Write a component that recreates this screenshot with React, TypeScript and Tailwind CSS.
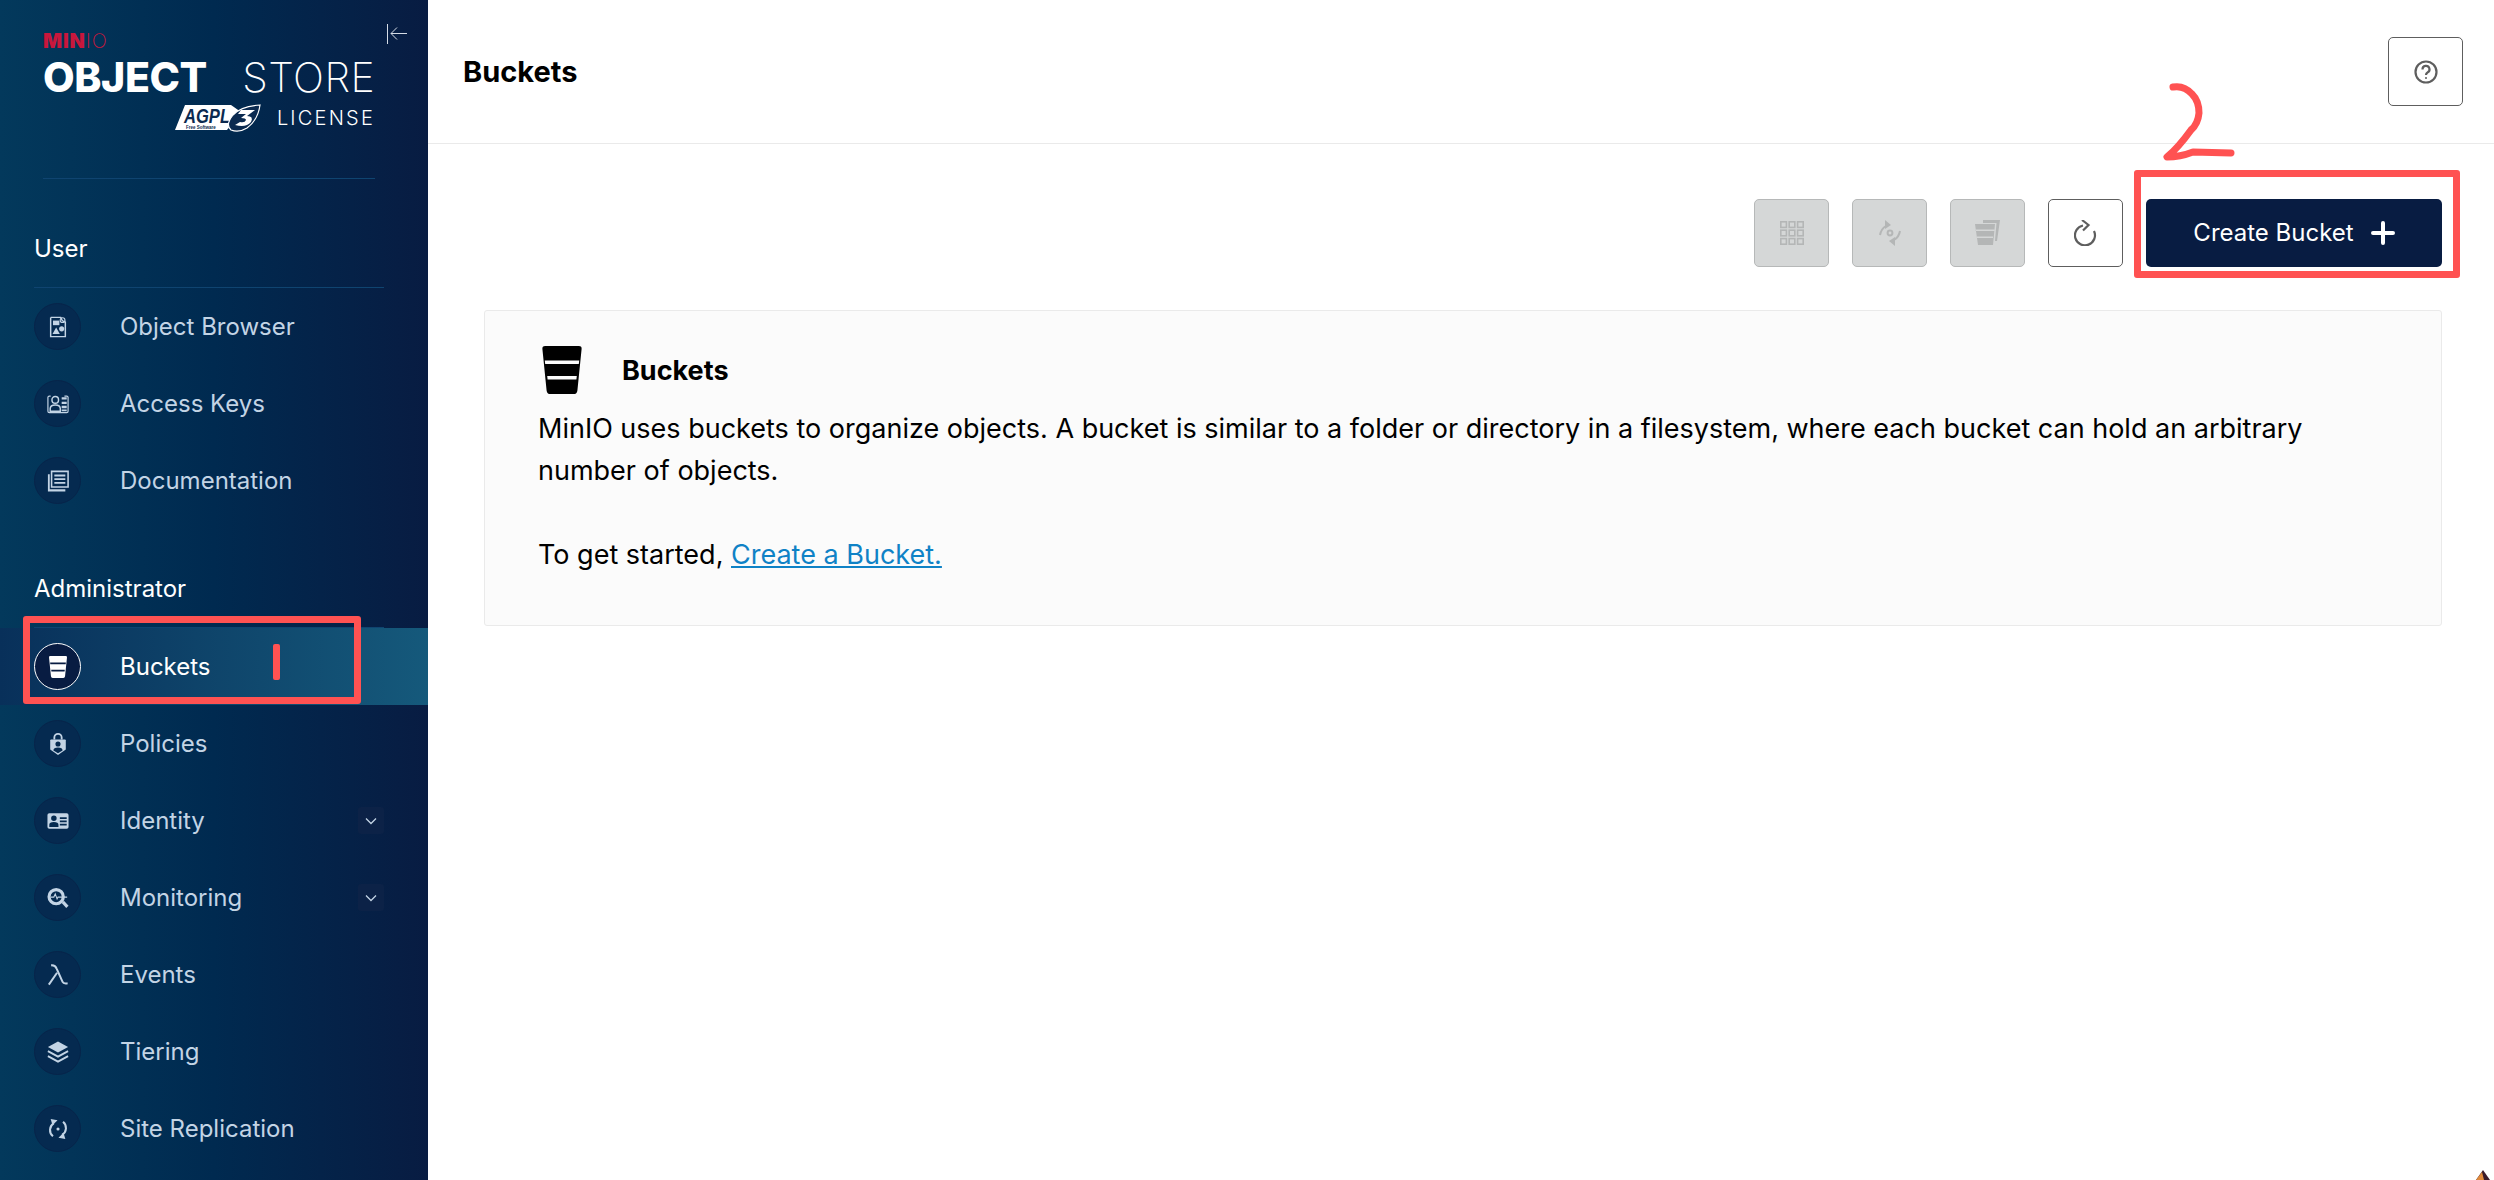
import React from "react";

const Ico = ({ children, s = 22, vb = 24 }: { children: React.ReactNode; s?: number; vb?: number }) => (
  <svg width={s} height={s} viewBox={`0 0 ${vb} ${vb}`} fill="currentColor">{children}</svg>
);

const BucketShape = ({ cut }: { cut: string }) => (
  <>
    <path d="M2.2 1.5Q2 0 3.6 0H20.4Q22 0 21.8 1.5L19.7 22.2Q19.5 24 17.8 24H6.2Q4.5 24 4.3 22.2Z" />
    <path d="M3.4 7.2H20.6L20.4 9H3.6ZM4.6 15H19.4L19.2 16.8H4.8Z" fill={cut} />
  </>
);

const ObjectIcon = () => (
  <Ico>
    <path d="M4 1.5H15.5M20 6V22.5H4V1.5M15.5 1.5A4 4 0 0 0 20 6" fill="none" stroke="currentColor" strokeWidth="1.6" />
    <circle cx="17" cy="4.5" r="2.6" fill="none" stroke="currentColor" strokeWidth="1.2" />
    <rect x="6.5" y="5" width="7" height="5" />
    <path d="M10 12.5L14 19.5H6Z" />
    <circle cx="16" cy="14" r="2.8" />
  </Ico>
);
const KeysIcon = () => (
  <Ico>
    <path d="M4 3.5H2.5Q1 3.5 1 5V20Q1 21.5 2.5 21.5H21.5Q23 21.5 23 20V5Q23 3.5 21.5 3.5H19" fill="none" stroke="currentColor" strokeWidth="1.3" />
    <circle cx="9" cy="7.5" r="3.6" fill="none" stroke="currentColor" strokeWidth="1.6" />
    <path d="M3.5 20V17Q3.5 13 9 13Q14.5 13 14.5 17V20Z" fill="none" stroke="currentColor" strokeWidth="1.6" />
    <path d="M16 4.5H21.5V7H16ZM16 9.5H21.5V12H16ZM16 14H21.5V16.5H16ZM16 18H21.5V20H16Z" />
  </Ico>
);
const DocIcon = () => (
  <Ico>
    <path d="M5 1.5H23V18.5H5Z" fill="none" stroke="currentColor" strokeWidth="1.7" />
    <path d="M8 5H20V7H8ZM8 9H20V11H8ZM8 13H20V15H8Z" />
    <path d="M1 4.5H3V21H20V23.5H1Z" />
  </Ico>
);
const PolicyIcon = () => (
  <Ico>
    <path d="M8 7V5A4 4 0 0 1 16 5V7" fill="none" stroke="currentColor" strokeWidth="2" />
    <path d="M4.5 7H19.5Q20.5 7 20.5 8V18L12 24L3.5 18V8Q3.5 7 4.5 7Z" />
    <circle cx="12" cy="12" r="2.8" fill="#052a50" />
    <path d="M7 19Q7 15.8 12 15.8Q17 15.8 17 19L12 22Z" fill="#052a50" />
  </Ico>
);
const IdentityIcon = () => (
  <Ico>
    <path fillRule="evenodd" d="M2.5 3.5H21.5Q23.5 3.5 23.5 5.5V18.5Q23.5 20.5 21.5 20.5H2.5Q.5 20.5 .5 18.5V5.5Q.5 3.5 2.5 3.5ZM7.5 6A3 3 0 1 0 7.5 12A3 3 0 1 0 7.5 6ZM2.5 18.5H12.5V16Q12.5 13 7.5 13Q2.5 13 2.5 16ZM14 8V9.8H21.5V8ZM14 11.5V13.3H21.5V11.5ZM14 15V16.8H21.5V15Z" />
  </Ico>
);
const MonitorIcon = () => (
  <Ico>
    <path fillRule="evenodd" d="M10 1A9.5 9.5 0 1 0 10 20A9.5 9.5 0 1 0 10 1ZM10 4.5A6 6 0 1 1 10 16.5A6 6 0 1 1 10 4.5Z" />
    <path d="M4 11H7.5L9 7.5L11 13L12 11H22" fill="none" stroke="currentColor" strokeWidth="1.2" />
    <path d="M16 17.5L18.5 15L23.5 20.5L21 23Z" />
  </Ico>
);
const LambdaIcon = () => (
  <Ico>
    <path d="M4.5 1.5Q9 1 10.5 5L17 19.5Q18 21.8 22.5 21" fill="none" stroke="currentColor" strokeWidth="2.2" />
    <path d="M11 9.5L2 22.5" fill="none" stroke="currentColor" strokeWidth="2.2" />
  </Ico>
);
const TierIcon = () => (
  <Ico>
    <path d="M12 .5L23 6.5L12 12.5L1 6.5Z" />
    <path d="M1 11L12 17L23 11M1 16.5L12 22.5L23 16.5" fill="none" stroke="currentColor" strokeWidth="2" />
  </Ico>
);
const ReplicationIcon = () => (
  <Ico>
    <path d="M7.5 5.5A9 9 0 0 0 6.5 20M16.5 18.5A9 9 0 0 0 17.5 4" fill="none" stroke="currentColor" strokeWidth="2.2" />
    <path d="M4 1L11.5 2.5L6 8ZM20 23L12.5 21.5L18 16Z" />
    <circle cx="12" cy="12" r="1.7" />
  </Ico>
);

const Circle = ({ children, active }: { children: React.ReactNode; active?: boolean }) => (
  <span
    className={
      "flex h-[47px] w-[47px] shrink-0 items-center justify-center rounded-full border " +
      (active ? "border-white bg-[#081c42] text-white" : "border-[#07244a] bg-[#052a50] text-[#c3d4e5]")
    }
  >
    {children}
  </span>
);

const NavRow = ({ icon, label, chevron, active }: { icon: React.ReactNode; label: string; chevron?: boolean; active?: boolean }) => (
  <div
    className={
      "flex h-[77px] items-center pl-[34px] pr-[44px] " +
      (active ? "bg-[linear-gradient(90deg,#08305a,#15597b)]" : "")
    }
  >
    <Circle active={active}>{icon}</Circle>
    <span className={"ml-[39px] flex-1 text-[24px] leading-none " + (active ? "text-white" : "text-[#c3d4e5]")}>{label}</span>
    {chevron && (
      <span className="flex h-[27px] w-[26px] items-center justify-center rounded-[3px] bg-[#0c2247] text-[#c3d4e5]">
        <svg width="12" height="8" viewBox="0 0 12 8" fill="none" stroke="currentColor" strokeWidth="1.3">
          <path d="M1 1.5L6 6.5L11 1.5" />
        </svg>
      </span>
    )}
  </div>
);

const SectionLabel = ({ children }: { children: React.ReactNode }) => (
  <div className="ml-[34px] h-[109px] w-[350px] border-b border-[#0f4470] pt-[52px] text-[24px] leading-[36px] text-white">{children}</div>
);

const Tool = ({ children, off }: { children: React.ReactNode; off?: boolean }) => (
  <button
    className={
      "flex h-[68px] w-[75px] items-center justify-center rounded-[5px] border " +
      (off ? "border-[#b6b8b8] bg-[#d5d7d7] text-[#b4b6b6]" : "border-[#5e5e5e] bg-white text-[#5e5e5e]")
    }
  >
    {children}
  </button>
);

const Agpl = () => (
  <svg width="86" height="28" viewBox="0 0 86 28" className="mr-[16px]">
    <path d="M10 1H56L66 8L52 26H0Z" fill="#fff" />
    <text x="9" y="19" fontFamily="Liberation Sans, sans-serif" fontStyle="italic" fontWeight="700" fontSize="20" fill="#0b2a50" textLength="46" lengthAdjust="spacingAndGlyphs">AGPL</text>
    <text x="11" y="25" fontFamily="Liberation Sans, sans-serif" fontWeight="700" fontSize="4.5" fill="#0b2a50">Free Software</text>
    <path d="M85 1Q66 2 58 11Q50 21 56 26Q64 29 72 24Q83 16 85 1Z" fill="#0b2a50" stroke="#fff" strokeWidth="1.2" />
    <path d="M66 6H80L72 12Q79 12 76 18Q71 24 60 21L65 18Q70 19 71 16Q71 14 66 14L71 10H63Z" fill="#fff" />
  </svg>
);

export default function App() {
  return (
    <div className="relative flex h-[1180px] w-[2494px] overflow-hidden bg-white font-['Inter','Liberation_Sans',sans-serif] text-black">
      <aside className="h-full w-[428px] shrink-0 bg-[linear-gradient(90deg,#03395c,#002a50_50%,#081c42)]">
        <div className="ml-[43px] h-[179px] w-[332px] border-b border-[#0f4470] pt-[24px]">
          <div className="flex h-[22px] w-[364px] items-start justify-between">
            <span className="mt-[7px] text-[20px] leading-[20px] tracking-[0.04em] text-[#c8173c]">
              <span className="font-black">MIN</span><span className="font-extralight">IO</span>
            </span>
            <svg width="20" height="20" viewBox="0 0 20 20" fill="none" stroke="#d5dce6" strokeWidth="1" className="">
              <path d="M.5 0V20M20 9.5H4M10 3.5L4 9.5L10 15.5" />
            </svg>
          </div>
          <div className="mt-[11px] flex h-[41px] items-center justify-between text-[41px] leading-[41px] text-white">
            <span className="font-extrabold tracking-[-0.01em]">OBJECT</span>
            <span className="font-extralight tracking-[0.01em]">STORE</span>
          </div>
          <div className="mt-[6px] flex items-center justify-end">
            <Agpl />
            <span className="text-[20px] font-light leading-none tracking-[0.11em] text-white">LICENSE</span>
          </div>
        </div>
        <SectionLabel>User</SectionLabel>
        <NavRow icon={<ObjectIcon />} label="Object Browser" />
        <NavRow icon={<KeysIcon />} label="Access Keys" />
        <NavRow icon={<DocIcon />} label="Documentation" />
        <SectionLabel>Administrator</SectionLabel>
        <NavRow active icon={<Ico s={22}><BucketShape cut="#081c42" /></Ico>} label="Buckets" />
        <NavRow icon={<PolicyIcon />} label="Policies" />
        <NavRow icon={<IdentityIcon />} label="Identity" chevron />
        <NavRow icon={<MonitorIcon />} label="Monitoring" chevron />
        <NavRow icon={<LambdaIcon />} label="Events" />
        <NavRow icon={<TierIcon />} label="Tiering" />
        <NavRow icon={<ReplicationIcon />} label="Site Replication" />
      </aside>

      <main className="min-w-0 flex-1">
        <header className="flex h-[144px] items-center justify-between border-b border-[#eaeaea] pl-[35px] pr-[31px]">
          <h1 className="text-[29px] font-bold leading-none">Buckets</h1>
          <button className="flex h-[69px] w-[75px] items-center justify-center rounded-[5px] border border-[#5e5e5e] bg-white text-[#5e5e5e]">
            <svg width="24" height="24" viewBox="0 0 24 24" fill="none" stroke="currentColor" strokeWidth="2.2">
              <circle cx="12" cy="12" r="10.5" />
              <path d="M8.5 9.5A3.5 3.5 0 1 1 13.5 12.5Q12 13.3 12 15" />
              <circle cx="12" cy="18" r="1" fill="currentColor" stroke="none" />
            </svg>
          </button>
        </header>
        <div className="flex justify-end gap-[23px] pr-[52px] pt-[55px]">
          <Tool off>
            <svg width="24" height="24" viewBox="0 0 24 24" fill="none" stroke="currentColor" strokeWidth="1.6">
              <rect x=".8" y=".8" width="5.6" height="5.6" /><rect x="9.2" y=".8" width="5.6" height="5.6" /><rect x="17.6" y=".8" width="5.6" height="5.6" />
              <rect x=".8" y="9.2" width="5.6" height="5.6" /><rect x="9.2" y="9.2" width="5.6" height="5.6" /><rect x="17.6" y="9.2" width="5.6" height="5.6" />
              <rect x=".8" y="17.6" width="5.6" height="5.6" /><rect x="9.2" y="17.6" width="5.6" height="5.6" /><rect x="17.6" y="17.6" width="5.6" height="5.6" />
            </svg>
          </Tool>
          <Tool off>
            <svg width="24" height="26" viewBox="0 0 24 26" fill="none" stroke="currentColor" strokeWidth="2">
              <path d="M8 6Q3 9 2 15M16 20Q21 17 22 11" />
              <path d="M7 0L13 5L7 9ZM17 26L11 21L17 17Z" fill="currentColor" stroke="none" />
              <circle cx="12" cy="13" r="2.4" />
            </svg>
          </Tool>
          <Tool off>
            <svg width="26" height="26" viewBox="0 0 26 26" fill="currentColor">
              <path d="M8 0H25L22 21L20 21L21.5 3H8Z" />
              <path d="M0 4H20L18 25H3ZM.7 9.5V11H19.3V9.5ZM2 16.5V18H18V16.5Z" fillRule="evenodd" />
            </svg>
          </Tool>
          <Tool>
            <svg width="24" height="26" viewBox="0 0 24 26" fill="none" stroke="currentColor" strokeWidth="2.2">
              <path d="M9 5.5A10 10 0 1 0 20 11" />
              <path d="M8 0L14.5 5L9 10.5" />
            </svg>
          </Tool>
          <button className="flex h-[68px] w-[296px] items-center justify-center rounded-[5px] bg-[#081c42] text-[24px] text-white">
            Create Bucket
            <svg width="24" height="24" viewBox="0 0 24 24" className="ml-[17px]" fill="none" stroke="#fff" strokeWidth="4" strokeLinecap="round">
              <path d="M12 2V22M2 12H22" />
            </svg>
          </button>
        </div>
        <section className="ml-[56px] mr-[52px] mt-[43px] h-[316px] rounded-[3px] border border-[#eaeaea] bg-[#fbfbfb] pl-[53px] pr-[40px] pt-[35px]">
          <div className="flex items-center">
            <Ico s={48}><BucketShape cut="#fbfbfb" /></Ico>
            <h2 className="ml-[36px] text-[27px] font-bold leading-none">Buckets</h2>
          </div>
          <p className="mt-[14px] text-[27px] leading-[42px]">
            MinIO uses buckets to organize objects. A bucket is similar to a folder or directory in a filesystem, where each bucket can hold an arbitrary number of objects.
          </p>
          <p className="mt-[42px] text-[27px] leading-[42px]">
            To get started, <a className="text-[#0f82c6] underline">Create a Bucket.</a>
          </p>
        </section>
      </main>

      {/* hand-drawn red annotations lying over the page */}
      <div className="absolute left-[23px] top-[616px] h-[88px] w-[338px] rounded-[3px] border-[7px] border-[#ff5252]" />
      <div className="absolute left-[273px] top-[644px] h-[36px] w-[7px] rounded-[2px] bg-[#ff5252]" />
      <div className="absolute left-[2134px] top-[170px] h-[108px] w-[326px] rounded-[3px] border-[7px] border-[#ff5252]" />
      <svg className="absolute left-[2160px] top-[80px]" width="80" height="84" viewBox="2160 80 80 84" fill="none" stroke="#ff5252" strokeWidth="7" strokeLinecap="round" strokeLinejoin="round">
        <path d="M2173 87Q2184 85 2192 94Q2199 101 2199 113Q2198 124 2191 130Q2178 148 2167 157Q2180 157 2193 152L2231 153" />
      </svg>
      <svg className="absolute left-[2476px] top-[1170px]" width="16" height="10" viewBox="0 0 16 10">
        <path d="M0 10L7 0L14 10Z" fill="#3a1a2a" />
        <path d="M0 10L6 2L8 10Z" fill="#e08a3c" />
      </svg>
    </div>
  );
}
